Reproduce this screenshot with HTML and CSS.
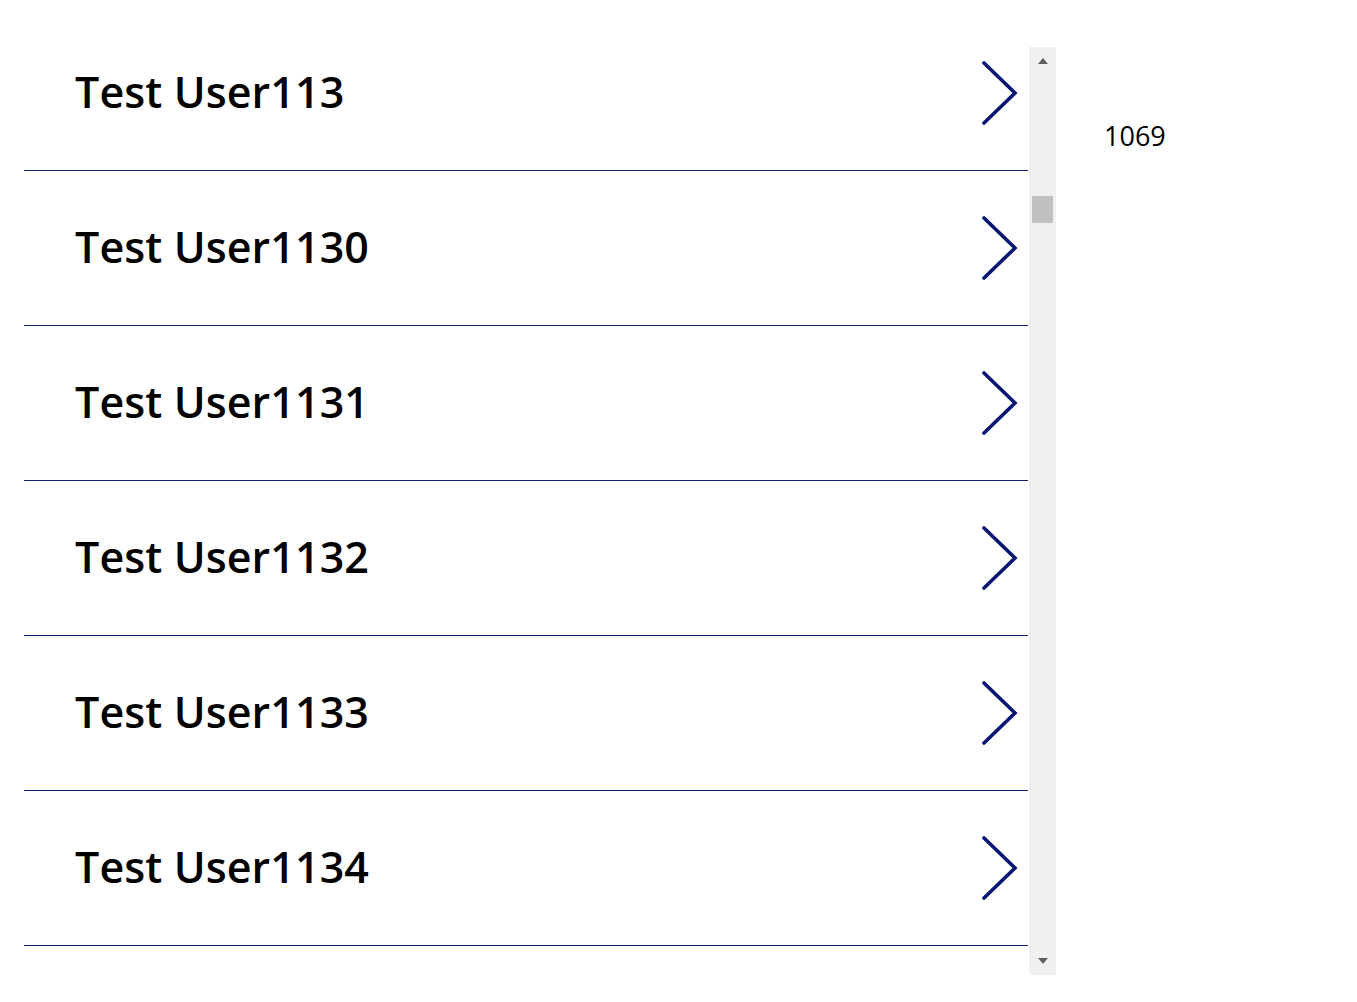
FILE: index.html
```html
<!DOCTYPE html>
<html>
<head>
<meta charset="utf-8">
<link rel="stylesheet" href="styles.css">
</head>
<body>
<div class="screen">
  <div class="gallery">
    <div class="list">
      <div class="row"><span class="name">Test User113</span><svg class="chev" viewBox="0 0 36 64"><path d="M2 2 L33 32 L2 62"/></svg></div>
      <div class="row"><span class="name">Test User1130</span><svg class="chev" viewBox="0 0 36 64"><path d="M2 2 L33 32 L2 62"/></svg></div>
      <div class="row"><span class="name">Test User1131</span><svg class="chev" viewBox="0 0 36 64"><path d="M2 2 L33 32 L2 62"/></svg></div>
      <div class="row"><span class="name">Test User1132</span><svg class="chev" viewBox="0 0 36 64"><path d="M2 2 L33 32 L2 62"/></svg></div>
      <div class="row"><span class="name">Test User1133</span><svg class="chev" viewBox="0 0 36 64"><path d="M2 2 L33 32 L2 62"/></svg></div>
      <div class="row"><span class="name">Test User1134</span><svg class="chev" viewBox="0 0 36 64"><path d="M2 2 L33 32 L2 62"/></svg></div>
    </div>
    <div class="scrollbar">
      <div class="arrow up"></div>
      <div class="track"><div class="thumb"></div></div>
      <div class="arrow down"></div>
    </div>
  </div>
  <div class="count">1069</div>
</div>
</body>
</html>
```
FILE: styles.css
```css
html, body {
  margin: 0;
  padding: 0;
  background: #ffffff;
}
.screen {
  display: flex;
  align-items: flex-start;
  padding-left: 24px;
  height: 1002px;
  overflow: hidden;
  font-family: "Open Sans", "Noto Sans", sans-serif;
}
.gallery {
  display: flex;
  align-items: flex-start;
}
.list {
  width: 1004px;
  height: 958px;
  margin-top: 16px;
  overflow: hidden;
}
.row {
  height: 154px;
  border-bottom: 1px solid #0e1f6e;
  display: flex;
  align-items: center;
  justify-content: space-between;
  box-sizing: content-box;
}
.name {
  margin-left: 51px;
  margin-top: -4px;
  font-size: 43px;
  font-weight: 600;
  color: #000000;
  letter-spacing: 0.1px;
}
.chev {
  width: 36px;
  height: 64px;
  margin-right: 10px;
  margin-top: -1px;
}
.chev path {
  fill: none;
  stroke: #061672;
  stroke-width: 3.6;
  stroke-linecap: round;
  stroke-linejoin: miter;
}
.scrollbar {
  margin-top: 47px;
  margin-left: 1px;
  width: 27px;
  height: 928px;
  background: #f0f0f0;
  display: flex;
  flex-direction: column;
  align-items: center;
}
.arrow {
  width: 0;
  height: 0;
  border-left: 5px solid transparent;
  border-right: 5px solid transparent;
}
.arrow.up {
  margin-top: 11px;
  border-bottom: 6px solid #606060;
}
.arrow.down {
  margin-bottom: 11px;
  border-top: 6px solid #606060;
}
.track {
  flex: 1;
  width: 100%;
  display: flex;
  justify-content: center;
}
.thumb {
  margin-top: 132px;
  width: 21px;
  height: 27px;
  background: #c1c1c1;
}
.count {
  margin-top: 117px;
  margin-left: 48px;
  font-size: 27px;
  color: #000000;
}
```
